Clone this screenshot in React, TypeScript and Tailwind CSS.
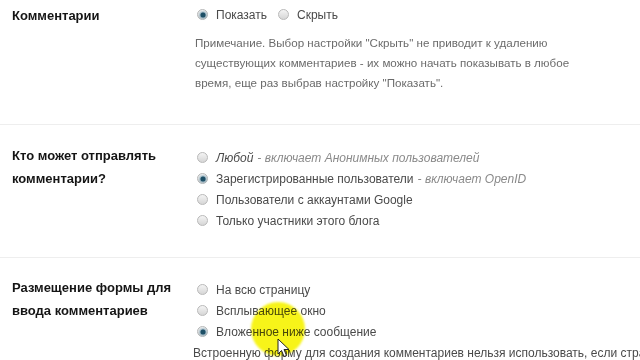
import React from "react";

function Radio({ checked }: { checked?: boolean }) {
  return (
    <span className="relative ml-[2px] mr-[8px] inline-block h-[11px] w-[11px] shrink-0 rounded-full border border-[#b9b9b9] bg-gradient-to-b from-[#f4f4f4] to-[#d6d6d6]">
      {checked && (
        <span className="absolute left-1/2 top-1/2 h-[5px] w-[5px] -translate-x-1/2 -translate-y-1/2 rounded-full bg-[#1d4f66] shadow-[0_0_2px_1px_rgba(60,120,150,0.6)]" />
      )}
    </span>
  );
}

function Option({
  checked,
  children,
  extra,
}: {
  checked?: boolean;
  children: React.ReactNode;
  extra?: string;
}) {
  return (
    <div className="flex h-[21px] items-center whitespace-nowrap text-[12px] text-[#4a4a4a]">
      <Radio checked={checked} />
      <span>{children}</span>
      {extra && <span className="ml-1 italic text-[#8a8a8a]">- {extra}</span>}
    </div>
  );
}

function Label({ children }: { children: React.ReactNode }) {
  return (
    <div className="w-[195px] shrink-0 whitespace-nowrap pl-3 text-[13px] font-bold leading-[23px] text-[#151515]">
      {children}
    </div>
  );
}

export default function App() {
  return (
    <div
      className="relative h-[360px] w-[640px] overflow-hidden bg-white"
      style={{ fontFamily: '"Liberation Sans", Arial, sans-serif' }}
    >
      {/* Комментарии */}
      <section className="flex border-b border-[#eeeeee] pb-[31px] pt-[4px]">
        <Label>Комментарии</Label>
        <div className="flex-1">
          <div className="flex h-[21px] items-center text-[12px] text-[#4a4a4a]">
            <Radio checked />
            <span className="mr-[9px]">Показать</span>
            <Radio />
            <span>Скрыть</span>
          </div>
          <p className="mt-[8px] whitespace-nowrap text-[11.6px] leading-[20px] text-[#6b6b6b]">
            Примечание. Выбор настройки "Скрыть" не приводит к удалению
            <br />
            существующих комментариев - их можно начать показывать в любое
            <br />
            время, еще раз выбрав настройку "Показать".
          </p>
        </div>
      </section>

      {/* Кто может отправлять */}
      <section className="flex border-b border-[#eeeeee] pb-[26px] pt-[19px]">
        <Label>
          Кто может отправлять
          <br />
          комментарии?
        </Label>
        <div className="flex-1 pt-[3px]">
          <Option extra="включает Анонимных пользователей">
            <span className="italic">Любой</span>
          </Option>
          <Option checked extra="включает OpenID">
            Зарегистрированные пользователи
          </Option>
          <Option>Пользователи с аккаунтами Google</Option>
          <Option>Только участники этого блога</Option>
        </div>
      </section>

      {/* Размещение формы */}
      <section className="flex pt-[18px]">
        <Label>
          Размещение формы для
          <br />
          ввода комментариев
        </Label>
        <div className="min-w-0 flex-1 pt-[3px]">
          <Option>На всю страницу</Option>
          <Option>Всплывающее окно</Option>
          <Option checked>Вложенное ниже сообщение</Option>
          <p className="-ml-[2px] whitespace-nowrap text-[12px] leading-[22px] text-[#4a4a4a]">
            Встроенную форму для создания комментариев нельзя использовать,
            если страница
          </p>
        </div>
      </section>

      {/* cursor highlight */}
      <div className="pointer-events-none absolute left-[251px] top-[302px] h-[54px] w-[54px] rounded-full bg-[#f6f300] opacity-90 mix-blend-multiply blur-[1px]" />
      <svg
        className="absolute left-[277px] top-[338px]"
        width="14"
        height="20"
        viewBox="0 0 14 20"
      >
        <path
          d="M1 1 L1 16 L4.5 12.5 L7 18.5 L9.5 17.5 L7 11.5 L12 11.5 Z"
          fill="#fff"
          stroke="#222"
          strokeWidth="1"
          strokeLinejoin="round"
        />
      </svg>
    </div>
  );
}
